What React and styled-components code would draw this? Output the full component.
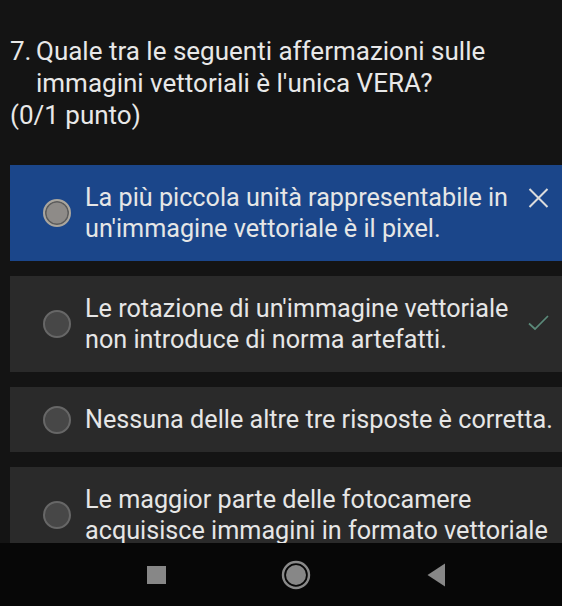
import React from "react";
import styled, { createGlobalStyle } from "styled-components";

const Global = createGlobalStyle`
  html, body { margin: 0; padding: 0; background: #141414; }
  body { font-family: Roboto, "Noto Sans", "Liberation Sans", sans-serif; }
  * { box-sizing: border-box; }
`;

const Screen = styled.div`
  width: 562px;
  height: 606px;
  display: flex;
  flex-direction: column;
  background: #141414;
  overflow: hidden;
`;

const Content = styled.div`
  flex: 1;
  overflow: hidden;
  display: flex;
  flex-direction: column;
  padding-top: 35px;
`;

const Question = styled.div`
  display: grid;
  grid-template-columns: 26px 1fr;
  padding-left: 10px;
  color: #e8e8e8;
  font-size: 26px;
  line-height: 32px;
  white-space: nowrap;
`;

const Num = styled.span``;

const Points = styled.div`
  grid-column: 1 / span 2;
`;

const Options = styled.div`
  display: flex;
  flex-direction: column;
  gap: 15px;
  margin-top: 34px;
  margin-left: 10px;
`;

const Card = styled.div`
  display: grid;
  grid-template-columns: 27px 1fr auto;
  column-gap: 15px;
  align-items: center;
  padding: 17px 0 17px 33px;
  background: ${(p) => (p.$selected ? "#1b468a" : "#2a2a2a")};
  flex-shrink: 0;
`;

const Radio = styled.span`
  width: 28px;
  height: 28px;
  margin-left: -0.5px;
  border-radius: 50%;
  background: ${(p) => (p.$selected ? "#8e8b88" : "#474747")};
  border: 2px solid ${(p) => (p.$selected ? "#aaa69e" : "#676767")};
  box-shadow: ${(p) => (p.$selected ? "inset 0 0 0 1.5px #5c5c5c" : "none")};
`;

const Text = styled.div`
  color: #e6e6e6;
  font-size: 25.2px;
  line-height: 31px;
  white-space: nowrap;
`;

const Mark = styled.svg`
  display: block;
  width: 21px;
  height: 20px;
  margin-right: 13px;
  align-self: ${(p) => (p.$top ? "start" : "center")};
  margin-top: ${(p) => (p.$top ? "6px" : "0")};
`;

const NavBar = styled.div`
  height: 63px;
  flex-shrink: 0;
  background: #070707;
  display: flex;
  align-items: center;
  justify-content: center;
  gap: 100px;
  padding-left: 30px;
`;

const NavItem = styled.div`
  width: 40px;
  height: 40px;
  display: flex;
  align-items: center;
  justify-content: center;
`;

function CrossIcon() {
  return (
    <Mark $top viewBox="0 0 21 20">
      <path d="M1.5 1 L19.5 19 M19.5 1 L1.5 19" stroke="#dcdcdc" strokeWidth="2" fill="none" />
    </Mark>
  );
}

function CheckIcon() {
  return (
    <Mark viewBox="0 0 21 20">
      <path d="M1 9.5 L7 15 L20 2" stroke="#5b8a7a" strokeWidth="1.7" fill="none" strokeLinejoin="miter" />
    </Mark>
  );
}

const options = [
  {
    lines: ["La più piccola unità rappresentabile in", "un'immagine vettoriale è il pixel."],
    selected: true,
    mark: "cross",
  },
  {
    lines: ["Le rotazione di un'immagine vettoriale", "non introduce di norma artefatti."],
    mark: "check",
  },
  { lines: ["Nessuna delle altre tre risposte è corretta."] },
  {
    lines: ["Le maggior parte delle fotocamere", "acquisisce immagini in formato vettoriale"],
  },
];

export default function App() {
  return (
    <Screen>
      <Global />
      <Content>
        <Question>
          <Num>7.</Num>
          <div>
            Quale tra le seguenti affermazioni sulle
            <br />
            immagini vettoriali è l'unica VERA?
          </div>
          <Points>(0/1 punto)</Points>
        </Question>
        <Options>
          {options.map((o, i) => (
            <Card key={i} $selected={o.selected}>
              <Radio $selected={o.selected} />
              <Text>
                {o.lines.map((l, j) => (
                  <React.Fragment key={j}>
                    {j > 0 && <br />}
                    {l}
                  </React.Fragment>
                ))}
              </Text>
              {o.mark === "cross" ? <CrossIcon /> : o.mark === "check" ? <CheckIcon /> : <span />}
            </Card>
          ))}
        </Options>
      </Content>
      <NavBar>
        <NavItem>
          <svg width="19" height="18" viewBox="0 0 19 18">
            <rect x="0" y="0" width="19" height="18" fill="#878787" />
          </svg>
        </NavItem>
        <NavItem>
          <svg width="30" height="30" viewBox="0 0 30 30">
            <circle cx="15" cy="15" r="13" stroke="#8a8a8a" strokeWidth="2.4" fill="none" />
            <circle cx="15" cy="15" r="10" fill="#878787" />
          </svg>
        </NavItem>
        <NavItem>
          <svg width="19" height="24" viewBox="0 0 19 24">
            <path d="M18 0.5 L0.5 12 L18 23.5 Z" fill="#878787" />
          </svg>
        </NavItem>
      </NavBar>
    </Screen>
  );
}
